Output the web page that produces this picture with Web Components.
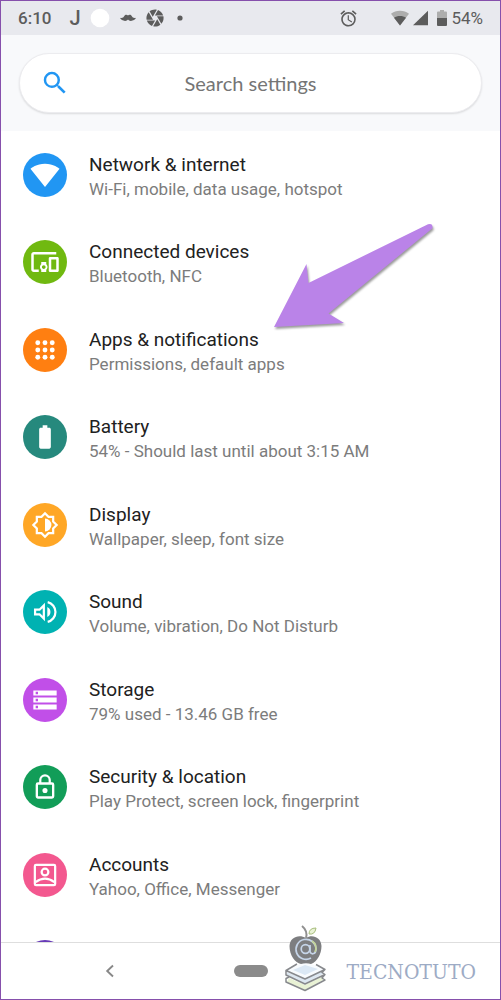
<!DOCTYPE html>
<html lang="en">
<head>
<meta charset="utf-8">
<meta name="viewport" content="width=device-width, initial-scale=1">
<title>Settings</title>
<style>
html, body { margin: 0; }
body { font-family: Roboto, "Liberation Sans", sans-serif; color: #212121; background: #fff; }
</style>
</head>
<body>
<settings-app></settings-app>
<script>
function define(name, html) {
  const template = document.createElement('template');
  template.innerHTML = html;
  customElements.define(name, class extends HTMLElement {
    constructor() {
      super();
      this.attachShadow({ mode: 'open' }).append(template.content.cloneNode(true));
    }
  });
}

define('status-bar', `
<style>
:host { display: flex; align-items: center; height: 34px; flex: none; padding: 0 17px; background: #e8e9ee; color: #5c5c5c; font-size: 17px; line-height: 20px; }
.side { display: flex; align-items: center; }
.time { font-weight: 500; margin-right: 18px; }
.note { font-weight: 500; font-size: 20px; width: 21px; }
.apps svg { margin-right: 10px; }
.right { margin-left: auto; }
svg { display: block; fill: #5c5c5c; }
.alarm { margin-right: 34px; }
.wifi, .signal { margin-right: 4px; }
.signal { margin-right: 8px; }
.battery { margin-right: 4px; }
</style>
<div class="side apps">
  <span class="time">6:10</span>
  <span class="note">J</span>
  <svg width="20" height="20" viewBox="0 0 20 20"><circle cx="10" cy="10" r="9.3" style="fill:#fff"/></svg>
  <svg width="16" height="8" viewBox="0 0 16 8"><path d="M8 1.4C6.8.2 5 .5 4.3 2 3.6 3.7 2 4.3 0 3.8.9 6.8 6.5 8 8 5.600c1.500 2.400 7.100 1.200 8-1.800-2 .5-3.600-.1-4.300-1.800C11 .5 9.200.2 8 1.400z"/></svg>
  <svg width="18" height="18" viewBox="1.500 1.500 21 21"><path d="M9.400 10.500l4.770-8.260C13.470 2.090 12.750 2 12 2c-2.400 0-4.600.85-6.320 2.250l3.660 6.350.06-.1zM21.540 9c-.92-2.920-3.150-5.260-6-6.340L11.880 9h9.660zm.26 1h-7.490l.29.500 4.760 8.250C21 16.970 22 14.610 22 12c0-.69-.07-1.350-.2-2zM8.540 12l-3.900-6.750C3.010 7.030 2 9.390 2 12c0 .69.07 1.350.2 2h7.490l-1.150-2zm-6.080 3c.92 2.920 3.150 5.260 6 6.340L12.120 15H2.460zm11.270 0l-3.900 6.760c.7.150 1.420.24 2.170.24 2.400 0 4.600-.85 6.320-2.250l-3.660-6.350-.93 1.600z"/></svg>
  <svg width="12" height="12" viewBox="0 0 12 12"><circle cx="6" cy="6" r="2.600"/></svg>
</div>
<div class="side right">
  <svg class="alarm" width="17" height="17" viewBox="1.500 1.500 21 21"><path d="M22 5.720l-4.600-3.860-1.290 1.530 4.600 3.860L22 5.720zM7.880 3.390L6.600 1.860 2 5.710l1.290 1.530 4.590-3.850zM12.500 8H11v6l4.750 2.850.75-1.230-4-2.370V8zM12 4c-4.970 0-9 4.030-9 9s4.020 9 9 9a9 9 0 1 0 0-18zm0 16c-3.870 0-7-3.130-7-7s3.130-7 7-7 7 3.130 7 7-3.130 7-7 7z"/></svg>
  <svg class="wifi" width="18" height="16" viewBox="0 0 18 16"><path style="fill:#adadad" d="M9 15.500L0 3.800C2.400 1.800 5.500.8 9 .8s6.600 1 9 3L9 15.500z"/><path d="M9 15.500L3 7.700C4.700 6.500 6.700 6 9 6s4.300.5 6 1.700L9 15.500z"/></svg>
  <svg class="signal" width="16" height="16" viewBox="0 0 16 16"><path d="M0 15.300L15 .8v14.500z"/></svg>
  <svg class="battery" width="10" height="16" viewBox="0 0 10 16"><path style="fill:#adadad" d="M3 0h4v1.500h2q1 0 1 1V8H0V2.500q0-1 1-1h2z"/><path d="M0 8h10v7q0 1-1 1H1q-1 0-1-1z"/></svg>
  <span>54%</span>
</div>`);

define('search-box', `
<style>
:host { display: block; flex: none; padding: 18px; background: #f8f9fb; }
label { display: flex; align-items: center; height: 58px; padding: 0 20px; border: 1px solid #ececef; border-radius: 30px; background: #fff; box-shadow: 0 1px 2px #0000001f; }
svg { flex: none; width: 30px; height: 30px; fill: #2196f3; }
input { flex: 1; min-width: 0; margin-right: 30px; padding: 0; border: 0; outline: 0; background: none; text-align: center; font: 20px/24px Lato, sans-serif; color: #757575; }
input::placeholder { color: #757575; opacity: 1; }
</style>
<label>
  <svg viewBox="0 0 24 24"><path d="M15.500 14h-.79l-.28-.27A6.471 6.471 0 0 0 16 9.500 6.500 6.500 0 1 0 9.500 16c1.610 0 3.090-.59 4.230-1.570l.27.28v.79l5 4.990L20.490 19l-4.990-5zm-6 0C7.010 14 5 11.990 5 9.500S7.010 5 9.500 5 14 7.010 14 9.500 11.990 14 9.500 14z"/></svg>
  <input type="text" aria-label="Search settings" placeholder="Search settings">
</label>`);

define('settings-row', `
<style>
:host { display: block; flex: none; }
a { display: flex; align-items: center; height: 100%; padding: 0 22px; gap: 22px; color: inherit; text-decoration: none; }
.icon { display: grid; place-items: center; flex: none; width: 44px; height: 44px; border-radius: 50%; background: var(--tint); }
.text { padding-top: 4px; min-width: 0; }
.title { display: block; font-size: 19px; line-height: 24px; color: #212121; }
.summary { display: block; font-size: 17px; line-height: 24px; color: #7c7c7c; }
</style>
<a href="#"><span class="icon"><slot name="icon"></slot></span>
<span class="text"><span class="title"><slot name="title"></slot></span><span class="summary"><slot></slot></span></span></a>`);

define('pointer-arrow', `
<style>
:host { display: block; width: 190px; height: 130px; pointer-events: none; }
svg { display: block; filter: drop-shadow(1px 2px 1px #0006); }
</style>
<svg width="190" height="130" viewBox="0 0 190 130"><path fill="#ba83e8" d="M14 117L46.500 54l2 19L168 14.200q5-1.500 4.500 4L68.500 103.500 84 113z"/></svg>`);

define('settings-list', `
<style>
:host { display: block; flex: 1; min-height: 0; position: relative; overflow: hidden; background: #fff; }
.rows { display: flex; flex-direction: column; }
settings-row { height: 87px; }
settings-row:nth-child(even) { height: 88px; }
svg { display: block; width: 28px; height: 28px; fill: #fff; }
svg.large { width: 30px; height: 30px; }
.line { fill: none; stroke: #fff; stroke-width: 1.900; }
pointer-arrow { position: absolute; left: 259px; top: 79px; }
</style>
<div class="rows">
<settings-row style="--tint:#2196f3"><svg slot="icon" class="large" viewBox="0 0 24 24"><path d="M12 21.500L23.640 7C23.190 6.660 18.710 3 12 3S.81 6.660.36 7z"/></svg><span slot="title">Network &amp; internet</span>Wi-Fi, mobile, data usage, hotspot</settings-row>
<settings-row style="--tint:#70b910"><svg slot="icon" class="large" viewBox="0 0 24 24"><path d="M3 6h18V4H3c-1.100 0-2 .9-2 2v12c0 1.100.9 2 2 2h4v-2H3V6zm10 6H9v1.780c-.61.55-1 1.330-1 2.220s.39 1.670 1 2.220V20h4v-1.780c.61-.55 1-1.340 1-2.220s-.39-1.670-1-2.220V12zm-2 5.500c-.83 0-1.500-.67-1.500-1.500s.67-1.500 1.500-1.500 1.500.67 1.500 1.500-.67 1.500-1.500 1.500zM22 8h-6c-.5 0-1 .5-1 1v10c0 .5.5 1 1 1h6c.5 0 1-.5 1-1V9c0-.5-.5-1-1-1zm-1 10h-4v-8h4v8z"/></svg><span slot="title">Connected devices</span>Bluetooth, NFC</settings-row>
<settings-row style="--tint:#ff7f11"><svg slot="icon" viewBox="0 0 24 24"><g><circle cx="5.800" cy="5.800" r="2.100"/><circle cx="12" cy="5.800" r="2.100"/><circle cx="18.200" cy="5.800" r="2.100"/><circle cx="5.800" cy="12" r="2.100"/><circle cx="12" cy="12" r="2.100"/><circle cx="18.200" cy="12" r="2.100"/><circle cx="5.800" cy="18.200" r="2.100"/><circle cx="12" cy="18.200" r="2.100"/><circle cx="18.200" cy="18.200" r="2.100"/></g></svg><span slot="title">Apps &amp; notifications</span>Permissions, default apps</settings-row>
<settings-row style="--tint:#26897d"><svg slot="icon" viewBox="0 0 24 24"><path d="M15.670 4H14V2h-4v2H8.330C7.600 4 7 4.600 7 5.330v15.330C7 21.400 7.600 22 8.330 22h7.330c.74 0 1.340-.6 1.340-1.330V5.330C17 4.600 16.400 4 15.670 4z"/></svg><span slot="title">Battery</span>54% - Should last until about 3:15 AM</settings-row>
<settings-row style="--tint:#ffa726"><svg slot="icon" viewBox="0 0 24 24"><path class="line" d="M12 2L15 5h4v4l3 3-3 3v4h-4l-3 3-3-3H5v-4l-3-3 3-3V5h4z"/><path d="M12 6.500a5.500 5.500 0 0 1 0 11z"/></svg><span slot="title">Display</span>Wallpaper, sleep, font size</settings-row>
<settings-row style="--tint:#00b2b2"><svg slot="icon" viewBox="0 0 24 24"><path class="line" d="M3.500 10h3.800L11 6.300v11.400L7.300 14H3.500zM14.300 3.500a8.750 8.750 0 0 1 0 17"/><path d="M14 7.700v8.600a4.800 4.800 0 0 0 0-8.600z"/></svg><span slot="title">Sound</span>Volume, vibration, Do Not Disturb</settings-row>
<settings-row style="--tint:#c14fe8"><svg slot="icon" viewBox="0 0 24 24"><path d="M2 20.200h20v-4.400H2zm2-3.200h2v2H4zM2 3.800v4.400h20V3.800zM6 7H4V5h2zm-4 7.200h20V9.800H2zM4 11h2v2H4z" fill-rule="evenodd"/></svg><span slot="title">Storage</span>79% used - 13.46 GB free</settings-row>
<settings-row style="--tint:#129d58"><svg slot="icon" viewBox="0 0 24 24"><path d="M12 17.200a2.200 2.200 0 1 0 0-4.400 2.200 2.200 0 0 0 0 4.400zM18 8h-1V6A5 5 0 0 0 7 6v2H6a2 2 0 0 0-2 2v10c0 1.100.9 2 2 2h12a2 2 0 0 0 2-2V10a2 2 0 0 0-2-2zM8.900 6a3.100 3.100 0 0 1 6.200 0v2H8.900zM18 20H6V10h12z" fill-rule="evenodd"/></svg><span slot="title">Security &amp; location</span>Play Protect, screen lock, fingerprint</settings-row>
<settings-row style="--tint:#f3588f"><svg slot="icon" viewBox="0 0 24 24"><rect class="line" x="3.300" y="3.300" width="17.400" height="17.400" rx="1"/><circle class="line" cx="12" cy="9.500" r="2.900"/><path class="line" d="M4 18.200q8-6 16 0"/></svg><span slot="title">Accounts</span>Yahoo, Office, Messenger</settings-row>
<settings-row style="--tint:#673ab7" aria-hidden="true"></settings-row>
</div>
<pointer-arrow></pointer-arrow>`);

define('nav-bar', `
<style>
:host { display: grid; grid-template-columns: repeat(3, 1fr); flex: none; height: 56px; padding: 0 38px; border-top: 1px solid #dedede; background: #fff; align-items: center; justify-items: center; }
button { display: grid; place-items: center; width: 48px; height: 40px; padding: 0; border: 0; background: none; }
svg { display: block; }
.home i { display: block; width: 34px; height: 12px; border-radius: 6px; background: #8b8b8b; }
</style>
<button aria-label="Back"><svg width="10" height="14" viewBox="0 0 10 14"><path d="M8 1.500L2.200 7 8 12.500" fill="none" stroke="#888" stroke-width="1.900"/></svg></button>
<button class="home" aria-label="Home"><i></i></button>`);

define('site-mark', `
<style>
:host { display: flex; align-items: center; gap: 20px; font: 21px/28px "DejaVu Serif Condensed", "Liberation Serif", serif; color: #9dabc5; }
span { padding-top: 28px; }
svg { display: block; }
</style>
<svg width="42" height="68" viewBox="0 0 42 68">
  <path d="M1 46.500L20 38l20 7.500L20 55z" fill="#f8fbfe"/>
  <path d="M8 46l12-5 13 4-13 6z" fill="#dbe8f5"/>
  <path d="M2 51l18 8.500L38 50v-3.500L20 55 2 48z" fill="#dde7f1"/>
  <path d="M2 58l18 8 18-10v-4L20 61 4 54z" fill="#e9f2d5"/>
  <g fill="none" stroke="#87898d" stroke-width="1.500" stroke-linejoin="round">
    <path d="M12 40L1 46.500 20 55l20-9.500-9-5M1 46.500V51l19 9 20-9.500-3-2 3-3M4 53l-3 1.500V58l19 8.500L40 56l-3-2 3-3.500"/>
  </g>
  <path d="M21 14c-7-4-16-1-16.500 8C4.500 31 10 39 16 40c3-1 7-1 10 0 6-2 10.500-10 10.500-18C36 13 27 10 21 14z" fill="#7d7e80"/>
  <path d="M21 14q2-7-4-12" fill="none" stroke="#909090" stroke-width="2"/>
  <path d="M24 10q0-6 7-6-1 7-7 6z" fill="#e9f2d5" stroke="#a7bd7c"/>
  <g fill="none" stroke-width="1.700"><path d="M26 34a10 10 0 1 1 5-9c0 6-6 6-6 2v-6" stroke="#c6d5e8"/><circle cx="20.500" cy="25" r="4.300" stroke="#c6d5e8"/><path d="M27 17q6 4 3 11" stroke="#c4d49b"/></g>
</svg>
<span>TECNOTUTO</span>`);

define('settings-app', `
<style>
:host { display: flex; flex-direction: column; box-sizing: border-box; height: 100vh; position: relative; border: 1px solid #8650ac; overflow: hidden; background: #fff; }
site-mark { position: absolute; right: 24px; bottom: 7px; }
</style>
<status-bar></status-bar>
<search-box></search-box>
<settings-list></settings-list>
<nav-bar></nav-bar>
<site-mark></site-mark>`);
</script>
</body>
</html>
